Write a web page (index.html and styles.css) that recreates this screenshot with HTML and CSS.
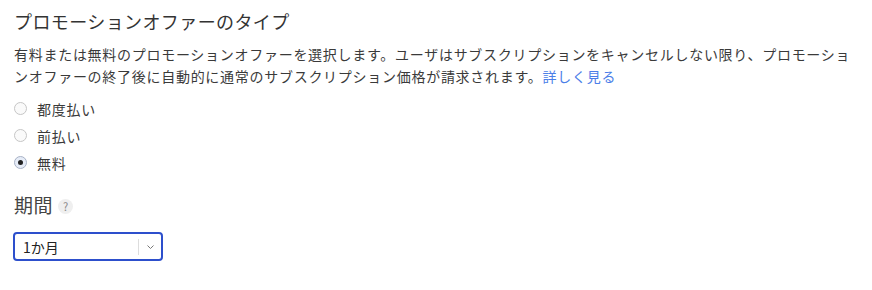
FILE: index.html
```html
<!DOCTYPE html>
<html lang="ja">
<head>
    <meta charset="UTF-8">
    <title>プロモーションオファーのタイプ</title>
    <link rel="stylesheet" href="styles.css">
</head>
<body>
    <section class="offer">
        <h2 class="offer-title">プロモーションオファーのタイプ</h2>
        <p class="offer-desc">有料または無料のプロモーションオファーを選択します。ユーザはサブスクリプションをキャンセルしない限り、プロモーションオファーの終了後に自動的に通常のサブスクリプション価格が請求されます。<a href="#" class="more">詳しく見る</a></p>

        <div class="radios">
            <label class="radio"><span class="dot"></span>都度払い</label>
            <label class="radio"><span class="dot"></span>前払い</label>
            <label class="radio"><span class="dot checked"></span>無料</label>
        </div>

        <h3 class="period-title">期間<span class="help">?</span></h3>

        <div class="select">
            <span class="select-value">1か月</span>
            <span class="select-arrow">
                <svg width="9" height="6" viewBox="0 0 9 6"><path d="M1.5 1.5l3 3 3-3" fill="none" stroke="#777" stroke-width="1"/></svg>
            </span>
        </div>
    </section>
</body>
</html>
```

FILE: styles.css
```css
body {
    margin: 0;
    background: #fff;
    font-family: "Noto Sans CJK JP", "Noto Sans", sans-serif;
    color: #333;
}
.offer {
    padding: 8px 14px;
}
.offer-title {
    margin: 0;
    font-size: 18px;
    font-weight: 400;
    letter-spacing: 0.4px;
    line-height: 26px;
    color: #333;
}
.offer-desc {
    margin: 9px 0 0;
    font-size: 14px;
    letter-spacing: 0.72px;
    line-height: 22px;
    color: #3a3a3a;
}
.more {
    color: #4b7ee8;
    text-decoration: none;
}
.radios {
    margin-top: 8px;
    display: flex;
    flex-direction: column;
}
.radio {
    display: flex;
    align-items: center;
    height: 27px;
    font-size: 14px;
    letter-spacing: 0.72px;
    color: #3a3a3a;
}
.dot {
    width: 11px;
    height: 11px;
    border: 1px solid #c6c6c6;
    border-radius: 50%;
    margin-right: 10px;
    background: #fafafa;
    position: relative;
}
.dot.checked {
    border-color: #a8b2c6;
    background: #e6ecf7;
}
.dot.checked::after {
    content: "";
    position: absolute;
    left: 3px;
    top: 3px;
    width: 5px;
    height: 5px;
    border-radius: 50%;
    background: #222;
}
.period-title {
    margin: 15px 0 0;
    font-size: 19px;
    font-weight: 400;
    letter-spacing: 0.5px;
    line-height: 28px;
    color: #444;
    display: flex;
    align-items: center;
}
.help {
    display: inline-flex;
    align-items: center;
    justify-content: center;
    width: 15px;
    height: 15px;
    border-radius: 50%;
    background: #efefef;
    color: #888;
    font-size: 11px;
    letter-spacing: 0;
    margin-left: 5px;
    margin-top: 2px;
}
.select {
    margin-top: 13px;
    margin-left: -1px;
    width: 146px;
    height: 25px;
    border: 2px solid #2d4fcc;
    border-radius: 4px;
    display: flex;
    align-items: center;
    font-size: 14px;
    color: #222;
}
.select-value {
    flex: 1;
    padding-left: 8px;
}
.select-arrow {
    width: 22px;
    height: 16px;
    border-left: 1px solid #ddd;
    display: flex;
    align-items: center;
    justify-content: center;
}
```
